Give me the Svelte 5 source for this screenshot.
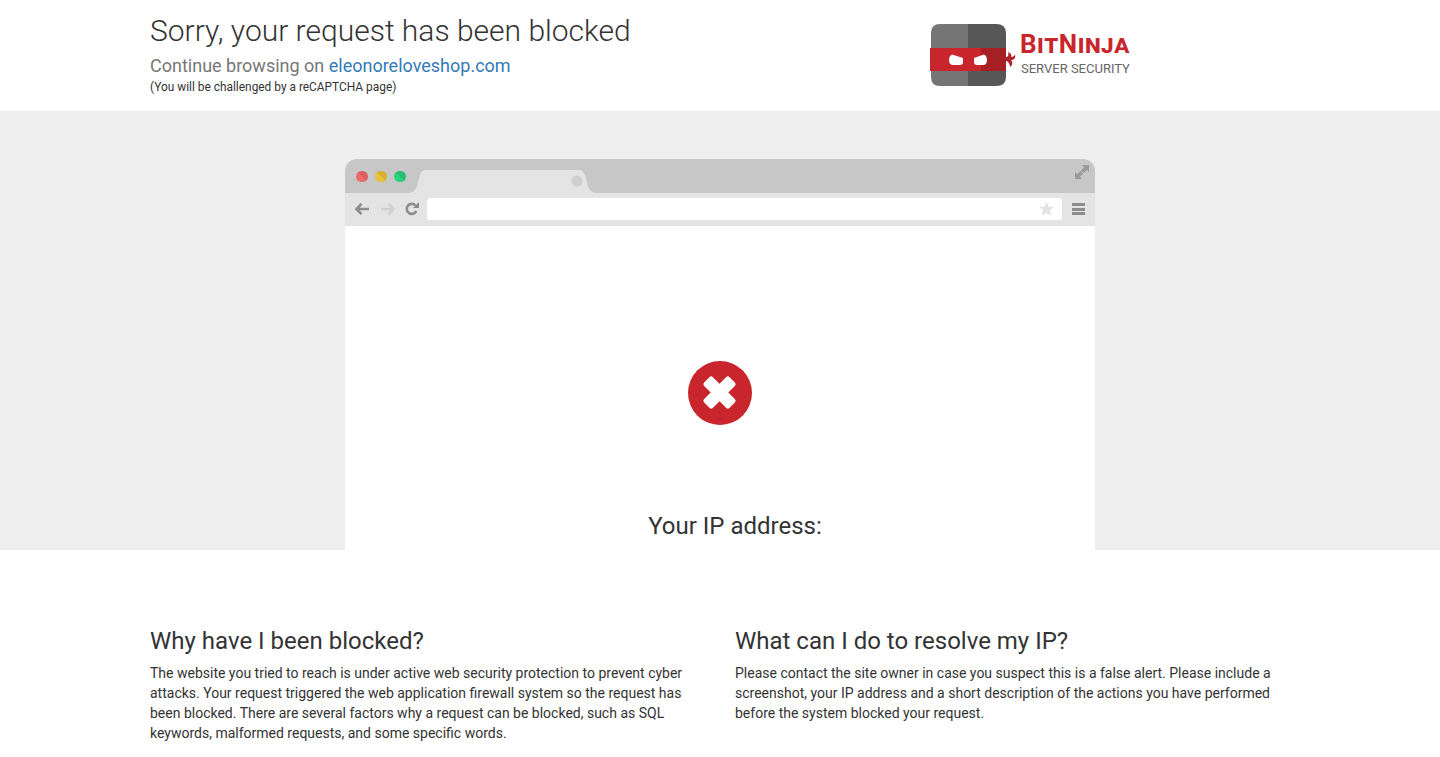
<script>
  const paragraphs = [
    {
      title: 'Why have I been blocked?',
      text: 'The website you tried to reach is under active web security protection to prevent cyber attacks. Your request triggered the web application firewall system so the request has been blocked. There are several factors why a request can be blocked, such as SQL keywords, malformed requests, and some specific words.'
    },
    {
      title: 'What can I do to resolve my IP?',
      text: 'Please contact the site owner in case you suspect this is a false alert. Please include a screenshot, your IP address and a short description of the actions you have performed before the system blocked your request.'
    }
  ];
</script>

<header class="container head">
  <div class="col">
    <h1>Sorry, your request has been blocked</h1>
    <p class="continue">Continue browsing on <a href="#top">eleonoreloveshop.com</a></p>
    <p class="note">(You will be challenged by a reCAPTCHA page)</p>
  </div>
  <div class="col logo">
    <svg width="86" height="62" viewBox="0 0 86 62">
      <path d="M38 0H10Q1 0 1 9V53Q1 62 10 62H38Z" fill="#757575" />
      <path d="M38 0H66Q76 0 76 9V53Q76 62 66 62H38Z" fill="#575757" />
      <path d="M0 24H51V47H0Z" fill="#c9252c" />
      <path d="M51 24H76V47H51Z" fill="#a51f25" />
      <path d="M76 33C78 33 79 31 78 28C81 29 82 31 81 33C83 33 85 32 85 30C86 34 84 36 81 36C83 38 83 41 80 43C80 40 78 37 76 37Z" fill="#b3222a" />
      <path d="M22 30.500L33 34V38Q33 41 30 41H23Q19 41 19 36Q19 32 22 30.500Z" fill="#fff" />
      <path d="M54 30.500L44 34V38Q44 41 47 41H53Q57 41 57 36Q57 32 54 30.500Z" fill="#fff" />
    </svg>
    <div class="brand">
      <div class="brand-name">BitNinja</div>
      <div class="brand-sub">SERVER SECURITY</div>
    </div>
  </div>
</header>

<section class="stage">
  <div class="browser">
    <div class="tabbar">
      <span class="dot red"></span>
      <span class="dot yellow"></span>
      <span class="dot green"></span>
      <svg class="tab" width="189" height="23" viewBox="0 0 189 23">
        <path d="M0 23Q7 23 9 16L12 5Q13.500 0 18 0H171Q175 0 177 5L180 16Q182 23 189 23Z" fill="#e4e4e4" />
        <circle cx="169" cy="11" r="5.700" fill="#d0d0d0" />
      </svg>
      <svg class="expand" width="14" height="14" viewBox="0 0 14 14">
        <path d="M7 0H14V7L11.800 4.800L8.500 8L6 5.500L9.200 2.200ZM0 14V7L2.200 9.200L5.500 6L8 8.500L4.800 11.800L7 14Z" fill="#9a9a9a" />
      </svg>
    </div>
    <div class="toolbar">
      <svg class="back" width="14" height="12" viewBox="0 0 14 12"><path d="M6.500 .8L1.500 6L6.500 11.200M2 6H14" fill="none" stroke="#8c8c8c" stroke-width="2.600" /></svg>
      <svg class="forward" width="14" height="12" viewBox="0 0 14 12"><path d="M7.500 .8L12.500 6L7.500 11.200M12 6H0" fill="none" stroke="#cfcfcf" stroke-width="2.600" /></svg>
      <svg class="reload" width="14" height="14" viewBox="0 0 14 14">
        <path d="M11.300 9A5 5 0 1 1 10.500 3.500" fill="none" stroke="#8c8c8c" stroke-width="2.600" />
        <path d="M8 6H14V0Z" fill="#8c8c8c" />
      </svg>
      <div class="address">
        <svg width="15" height="14" viewBox="0 0 24 23"><path d="M12 0L15.500 8H24L17.500 13.500L20 23L12 17.500L4 23L6.500 13.500L0 8H8.500Z" fill="#e3e3e3" /></svg>
      </div>
      <div class="menu"><span></span><span></span><span></span></div>
    </div>
    <div class="window">
      <svg width="64" height="64" viewBox="0 0 64 64">
        <circle cx="32" cy="32" r="32" fill="#c9252c" />
        <g transform="translate(31.500 31.500) rotate(45)" fill="#fff">
          <rect x="-18" y="-6.200" width="36" height="12.400" rx="2.500" />
          <rect x="-6.200" y="-18" width="12.400" height="36" rx="2.500" />
        </g>
      </svg>
      <h2 class="ip">Your IP address:</h2>
    </div>
  </div>
</section>

<section class="container info">
  {#each paragraphs as p}
    <div class="col">
      <h2>{p.title}</h2>
      <p>{p.text}</p>
    </div>
  {/each}
</section>

<style>
  :global(body) {
    font-family: Roboto, "Liberation Sans", sans-serif;
    color: #333;
    font-size: 14px;
    line-height: 20px;
    overflow: hidden;
  }

  h1, h2, p {
    margin: 0;
  }

  .container {
    width: 1170px;
    margin: 0 auto;
    display: grid;
    grid-template-columns: 1fr 1fr;
  }

  .col {
    padding: 0 15px;
  }

  .head {
    height: 111px;
  }

  h1 {
    font-size: 30px;
    font-weight: 300;
    line-height: 33px;
    margin-top: 14px;
  }

  .continue {
    font-size: 18px;
    line-height: 20px;
    color: #777;
    margin-top: 9px;
  }

  .continue a {
    color: #337ab7;
    text-decoration: none;
  }

  .note {
    font-size: 11.900px;
    line-height: 14px;
    margin-top: 4px;
  }

  .logo {
    display: flex;
    padding-left: 210px;
    padding-top: 24px;
    align-items: flex-start;
  }

  .brand {
    margin-left: 4px;
  }

  .brand-name {
    font-variant: small-caps;
    font-weight: 700;
    font-size: 26px;
    line-height: 28px;
    letter-spacing: .5px;
    color: #c9252c;
    margin-top: 6px;
  }

  .brand-sub {
    font-size: 13px;
    line-height: 14px;
    color: #666;
    margin-top: 4px;
    margin-left: 1px;
    white-space: nowrap;
  }

  .stage {
    height: 439px;
    background: #eee;
    padding-top: 48px;
    box-sizing: border-box;
    overflow: hidden;
  }

  .browser {
    width: 750px;
    height: 391px;
    margin: 0 auto;
    display: flex;
    flex-direction: column;
  }

  .tabbar {
    height: 34px;
    flex: none;
    background: #c7c7c7;
    border-radius: 12px 12px 0 0;
    position: relative;
    display: flex;
    align-items: center;
    gap: 7.500px;
    padding-left: 11px;
  }

  .dot {
    width: 11.500px;
    height: 11.500px;
    border-radius: 50%;
    margin-top: 1px;
  }

  .red {
    background: linear-gradient(45deg, #ef6b6b 50%, #dd5e5e 50%);
  }

  .yellow {
    background: linear-gradient(45deg, #e8c23c 50%, #d6b035 50%);
  }

  .green {
    background: linear-gradient(45deg, #2bd27e 50%, #26bd70 50%);
  }

  .tab {
    position: absolute;
    left: 63px;
    top: 11px;
  }

  .expand {
    position: absolute;
    right: 6px;
    top: 6px;
  }

  .toolbar {
    height: 33px;
    flex: none;
    background: #e4e4e4;
    display: flex;
    align-items: center;
    padding: 0 10px 1px;
    box-sizing: border-box;
  }

  .back {
    margin-right: 12px;
  }

  .forward {
    margin-right: 10px;
  }

  .address {
    width: 635px;
    height: 22px;
    margin-left: 8px;
    background: #fff;
    border-radius: 3px;
    display: flex;
    align-items: center;
    justify-content: flex-end;
    padding-right: 8px;
    box-sizing: border-box;
  }

  .menu {
    margin-left: 10px;
    display: flex;
    flex-direction: column;
    gap: 1.500px;
  }

  .menu span {
    width: 13px;
    height: 3px;
    background: #8c8c8c;
  }

  .window {
    flex: 1;
    background: #fff;
    display: flex;
    flex-direction: column;
    align-items: center;
    padding-top: 135px;
  }

  .ip {
    font-size: 24px;
    font-weight: 400;
    line-height: 26px;
    margin-top: 88px;
    padding-left: 30px;
  }

  .info {
    padding-top: 77px;
  }

  .info h2 {
    font-size: 24px;
    font-weight: 400;
    line-height: 28px;
    margin-bottom: 8px;
  }
</style>
